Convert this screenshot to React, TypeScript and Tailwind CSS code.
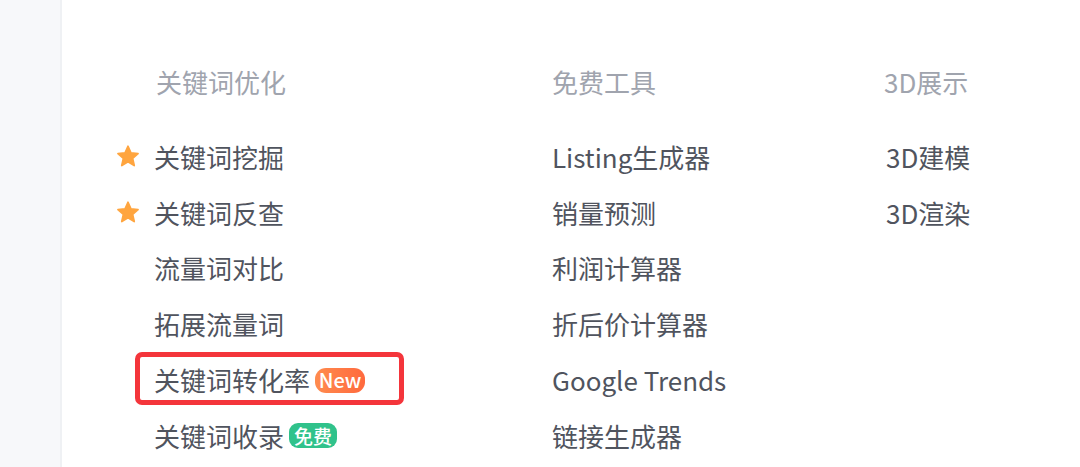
import React from "react";

function Star() {
  return (
    <svg width="25" height="25" viewBox="0 0 24 24" className="block">
      <path
        d="M12 1.8l2.9 6.6 7.1.7-5.4 4.8 1.6 7.1L12 17.3 5.8 21l1.6-7.1L2 9.1l7.1-.7z"
        fill="#ffa53f"
        stroke="#ffa53f"
        strokeWidth="1.8"
        strokeLinejoin="round"
      />
    </svg>
  );
}

type Item = { label: string; star?: boolean; badge?: "new" | "free"; boxed?: boolean };

const col1: Item[] = [
  { label: "关键词挖掘", star: true },
  { label: "关键词反查", star: true },
  { label: "流量词对比" },
  { label: "拓展流量词" },
  { label: "关键词转化率", badge: "new", boxed: true },
  { label: "关键词收录", badge: "free" },
];
const col2: Item[] = [
  { label: "Listing生成器" },
  { label: "销量预测" },
  { label: "利润计算器" },
  { label: "折后价计算器" },
  { label: "Google Trends" },
  { label: "链接生成器" },
];
const col3: Item[] = [{ label: "3D建模" }, { label: "3D渲染" }];

function Row({ item, withSlot }: { item: Item; withSlot?: boolean }) {
  return (
    <div className="relative flex h-[55.8px] items-center">
      {withSlot && <div className="mr-[14px] flex w-[24px] justify-center">{item.star ? <Star /> : null}</div>}
      <span className="whitespace-nowrap text-[26px] leading-none text-[#50545e]">{item.label}</span>
      {item.badge === "new" && (
        <span className="ml-[5px] flex h-[25px] w-[50px] items-center justify-center rounded-[11px] bg-gradient-to-r from-[#ff8b4e] to-[#ff693e] text-[20px] font-medium leading-none text-white">
          New
        </span>
      )}
      {item.badge === "free" && (
        <span className="ml-[5px] flex h-[25px] w-[48px] items-center justify-center rounded-[9px] bg-[#30c28b] text-[19px] font-medium leading-none text-white">
          免费
        </span>
      )}
      {item.boxed && (
        <div className="pointer-events-none absolute left-[19px] top-0 h-[53px] w-[269px] rounded-[7px] border-[5px] border-[#f4353b]" />
      )}
    </div>
  );
}

function Header({ text, className }: { text: string; className?: string }) {
  return (
    <div className={"flex h-[56px] items-center text-[26px] leading-none text-[#a0a4ae] " + (className ?? "")}>
      {text}
    </div>
  );
}

export default function App() {
  return (
    <div
      className="flex h-[467px] w-[1080px] overflow-hidden bg-white"
      style={{ fontFamily: '"Noto Sans CJK SC", "Noto Sans", sans-serif' }}
    >
      <div className="h-full w-[62px] shrink-0 border-r-2 border-[#eff1f4] bg-[#f7f8fa]" />
      <div className="flex flex-1 pl-[54px] pt-[54px]">
        <div className="flex w-[436px] shrink-0 flex-col">
          <Header text="关键词优化" className="mb-[19px] pl-[40px]" />
          {col1.map((it) => (
            <Row key={it.label} item={it} withSlot />
          ))}
        </div>
        <div className="flex w-[332px] shrink-0 flex-col">
          <Header text="免费工具" className="mb-[19px]" />
          {col2.map((it) => (
            <Row key={it.label} item={it} />
          ))}
        </div>
        <div className="flex flex-col">
          <Header text="3D展示" className="mb-[19px]" />
          {col3.map((it) => (
            <div key={it.label} className="pl-[2px]">
              <Row item={it} />
            </div>
          ))}
        </div>
      </div>
    </div>
  );
}
